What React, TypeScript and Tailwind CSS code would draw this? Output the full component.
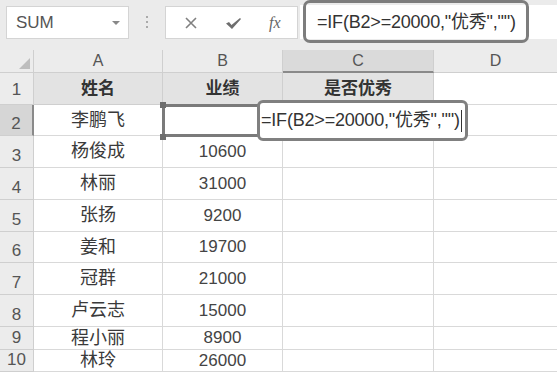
import React from "react";

const font = {
  fontFamily: '"Liberation Sans", "Noto Sans CJK SC", sans-serif',
};

const rows: { n: string; name: string; score: string; h: string }[] = [
  { n: "2", name: "李鹏飞", score: "", h: "h-[31px]" },
  { n: "3", name: "杨俊成", score: "10600", h: "h-[32px]" },
  { n: "4", name: "林丽", score: "31000", h: "h-[32px]" },
  { n: "5", name: "张扬", score: "9200", h: "h-[32px]" },
  { n: "6", name: "姜和", score: "19700", h: "h-[31px]" },
  { n: "7", name: "冠群", score: "21000", h: "h-[32px]" },
  { n: "8", name: "卢云志", score: "15000", h: "h-[32px]" },
  { n: "9", name: "程小丽", score: "8900", h: "h-[23px]" },
  { n: "10", name: "林玲", score: "26000", h: "h-[22px]" },
];

export default function App() {
  return (
    <div
      className="relative w-[557px] h-[376px] overflow-hidden bg-white text-[#333]"
      style={font}
    >
      {/* formula toolbar */}
      <div className="h-[50px] bg-[#ebebeb] flex items-start">
        <div className="mt-[6px] ml-[6px] w-[123px] h-[33px] bg-white border border-[#d4d4d4] flex items-center justify-between pl-[9px] pr-[8px]">
          <span className="text-[17px] text-[#555]">SUM</span>
          <span className="w-0 h-0 border-l-[4px] border-r-[4px] border-t-[4px] border-l-transparent border-r-transparent border-t-[#888]" />
        </div>
        <div className="mt-[16px] ml-[17px] flex flex-col gap-[3px]">
          <span className="w-[2px] h-[2px] bg-[#aaa]" />
          <span className="w-[2px] h-[2px] bg-[#aaa]" />
          <span className="w-[2px] h-[2px] bg-[#aaa]" />
        </div>
        <div className="mt-[6px] ml-[17px] w-[133px] h-[33px] bg-white border border-[#d4d4d4] flex items-center pl-[18px] gap-[27px] text-[#777]">
          <svg width="14" height="14" viewBox="0 0 14 14">
            <path d="M2 2 L12 12 M12 2 L2 12" stroke="#808080" strokeWidth="1.6" />
          </svg>
          <svg width="17" height="14" viewBox="0 0 17 14">
            <path d="M1 7.5 L4 6 L6.5 9 L15 2 L16 3 L7 13 Z" fill="#6e6e6e" />
          </svg>
          <span className="text-[16px] italic text-[#666]" style={{ fontFamily: '"Liberation Serif", serif' }}>
            fx
          </span>
        </div>
        <div className="mt-[5px] ml-[2px] flex-1 h-[34px] bg-white flex items-center pl-[17px]">
          <span className="text-[18px] text-[#333] tracking-[-0.2px]">
            =IF(B2&gt;=20000,"优秀","")
          </span>
        </div>
      </div>

      {/* sheet grid */}
      <div className="grid grid-cols-[34px_129px_120px_151px_1fr]">
        <div className="h-[23px] bg-[#ececec] border-r border-b border-[#cfcfcf] relative">
          <svg className="absolute right-[3px] bottom-[3px]" width="11" height="11" viewBox="0 0 11 11">
            <path d="M11 0 L11 11 L0 11 Z" fill="#bdbdbd" />
          </svg>
        </div>
        <div className="h-[23px] bg-[#ececec] border-r border-b border-[#cfcfcf] flex items-center justify-center text-[16px] text-[#555]">A</div>
        <div className="h-[23px] bg-[#ececec] border-r border-b border-[#cfcfcf] flex items-center justify-center text-[16px] text-[#555]">B</div>
        <div className="h-[23px] bg-[#dadada] border-r border-b-2 border-r-[#cfcfcf] border-b-[#8a8a8a] flex items-center justify-center text-[16px] text-[#555]">C</div>
        <div className="h-[23px] bg-[#ececec] border-b border-[#cfcfcf] flex items-center justify-center text-[16px] text-[#555]">D</div>

        <div className="h-[32px] bg-[#ececec] border-r border-b border-[#cfcfcf] flex items-end justify-center pb-[2px] text-[17px] text-[#555]">1</div>
        <div className="h-[32px] bg-[#e3e3e3] border-r border-b border-[#cfcfcf] flex items-center justify-center text-[17px] font-bold text-[#333]">姓名</div>
        <div className="h-[32px] bg-[#e3e3e3] border-r border-b border-[#cfcfcf] flex items-center justify-center text-[17px] font-bold text-[#333]">业绩</div>
        <div className="h-[32px] bg-[#e3e3e3] border-r border-b border-[#cfcfcf] flex items-center justify-center text-[17px] font-bold text-[#333]">是否优秀</div>
        <div className="h-[32px] border-b border-[#d9d9d9]" />

        {rows.map((r) => (
          <React.Fragment key={r.n}>
            <div
              className={`${r.h} ${
                r.n === "2" ? "bg-[#d6d6d6] border-r-2 border-r-[#8a8a8a]" : "bg-[#ececec] border-r border-r-[#cfcfcf]"
              } border-b border-b-[#cfcfcf] flex items-end justify-center pb-[1px] text-[17px] text-[#555] leading-none`}
            >
              <span className="mb-[2px]">{r.n}</span>
            </div>
            <div className={`${r.h} border-r border-b border-[#d9d9d9] flex items-center justify-center text-[18px] text-[#3a3a3a]`}>
              {r.name}
            </div>
            <div className={`${r.h} border-r border-b border-[#d9d9d9] flex items-center justify-center text-[17px] text-[#444]`}>
              {r.score}
            </div>
            <div className={`${r.h} border-r border-b border-[#d9d9d9]`} />
            <div className={`${r.h} border-b border-[#d9d9d9]`} />
          </React.Fragment>
        ))}
      </div>

      {/* formula bar highlight */}
      <div className="absolute left-[303px] top-0 w-[226px] h-[43px] border-[3px] border-[#7d7d7d] rounded-[7px]" />

      {/* B2 selection */}
      <div className="absolute left-[162px] top-[104px] w-[100px] h-[33px] border-[3px] border-[#7a7a7a]" />
      <span className="absolute left-[160px] top-[102px] w-[6px] h-[6px] bg-[#6e6e6e]" />
      <span className="absolute left-[160px] top-[134px] w-[6px] h-[6px] bg-[#6e6e6e]" />

      {/* in-cell formula edit */}
      <div className="absolute left-[257px] top-[100px] w-[211px] h-[41px] bg-white border-[3px] border-[#808080] rounded-[6px] flex items-center pl-[1px]">
        <span className="text-[18px] text-[#333] tracking-[-0.2px]">=IF(B2&gt;=20000,"优秀","")</span>
        <span className="ml-[1px] w-[1px] h-[22px] bg-[#333]" />
      </div>
    </div>
  );
}
